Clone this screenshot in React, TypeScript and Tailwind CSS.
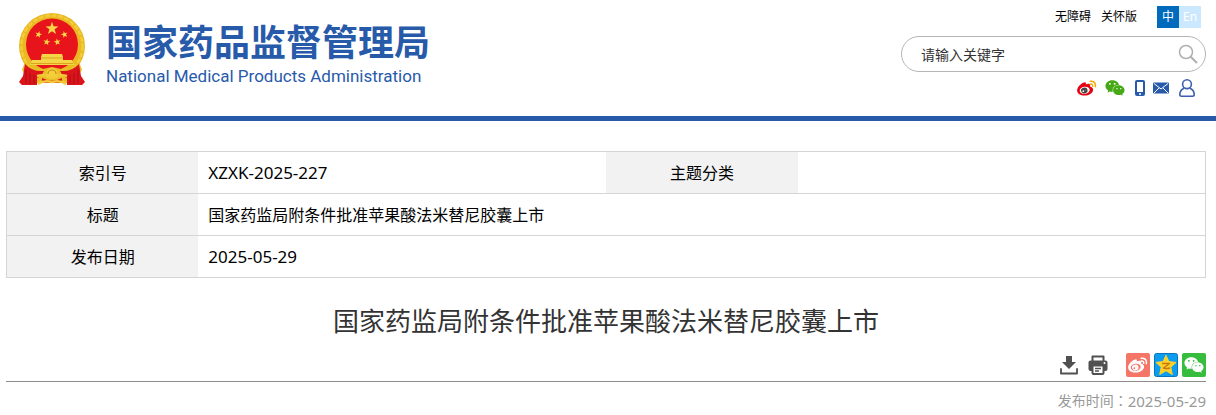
import React from 'react';
import { FaWeixin } from 'react-icons/fa';

const STAR = '0,-10 2.35,-3.24 9.51,-3.09 3.8,1.24 5.88,8.09 0,4 -5.88,8.09 -3.8,1.24 -9.51,-3.09 -2.35,-3.24';

const Emblem: React.FC = () => (
  <svg className="h-[73px] w-[68px] shrink-0" viewBox="0 0 68 73" aria-hidden="true">
    {/* wheat ring */}
    <circle cx="34" cy="33" r="33" fill="#e9b822" />
    <circle cx="34" cy="33" r="30.5" fill="none" stroke="#f2cc3a" strokeWidth="2.5" strokeDasharray="5 1.5" />
    <circle cx="34" cy="31.500" r="26" fill="#e8141b" />
    {/* stars */}
    <g fill="#f8d648">
      <polygon points={STAR} transform="translate(34 15.500) scale(.68)" />
      <polygon points={STAR} transform="translate(20.500 21.500) rotate(15) scale(.36)" />
      <polygon points={STAR} transform="translate(46.500 21.500) rotate(-15) scale(.36)" />
      <polygon points={STAR} transform="translate(28.700 29) rotate(10) scale(.36)" />
      <polygon points={STAR} transform="translate(39.300 29) rotate(-10) scale(.36)" />
    </g>
    {/* gate */}
    <path d="M24 41h20l1 3v3h9l2 5H12l2-5h9v-3z" fill="#f5d548" />
    <path d="M23 45h22M13 50.500h42" stroke="#dca41d" strokeWidth="1" />
    {/* ribbons */}
    <path d="M7 49q8 8 18 7l9-2 9 2q10 1 18-7l3 8-6 8v5H10v-5l-6-8z" fill="#e9bd25" />
    <path d="M7 51q7 8 19 7l-3 5-4 2v7H4L1 69l4-6zM61 51q-7 8-19 7l3 5 4 2v7h15l3-3-4-6z" fill="#db141c" />
    <path d="M8 57v13M12 60v11M16 62v9M60 57v13M56 60v11M52 62v9" stroke="#ad0f15" strokeWidth="1" />
    {/* cog */}
    <path d="M24 65q10 5 20 0v5H24z" fill="#db141c" />
    <circle cx="34" cy="60.500" r="5.500" fill="#f4cf3e" />
    <path d="M30 61a4 4 0 018 0" fill="none" stroke="#c98c16" strokeWidth="1.200" />
    <path d="M19 63q8-2 11 1h8q3-3 11-1M20 71q6-4 14-2 8-2 14 2" fill="none" stroke="#f2cb38" strokeWidth="2.500" />
  </svg>
);

interface WeiboProps {
  className: string;
  body: string;
  eye: string;
  pupil: string;
  wave: string;
}

const Weibo: React.FC<WeiboProps> = ({ className, body, eye, pupil, wave }) => (
  <svg className={className} viewBox="0 0 20 16" aria-hidden="true">
    <path
      d="M7.7 2.2c1-.3 1.5.6 1.1 2.1 2.3-1 4.600-.9 4.400 1.200-.1.700-.3 1.100.4 1.300 1.500.5 2.700 1.500 2.500 3.400-.4 3-4.300 5.300-8.600 5.300C3.400 15.500.1 13.500.1 10.400.1 7 4.500 2.900 7.700 2.200z"
      fill={body}
    />
    <ellipse cx="7.700" cy="10.200" rx="5" ry="3.500" fill={eye} transform="rotate(-8 7.700 10.200)" />
    <ellipse cx="7.300" cy="10.500" rx="3.300" ry="2.900" fill={pupil} transform="rotate(-15 7.300 10.500)" />
    <circle cx="6.300" cy="11.200" r=".9" fill={eye} />
    <circle cx="8.100" cy="10.100" r=".4" fill={eye} />
    <path
      d="M13.200 1.300c3.300-.7 5.900 1.700 5.100 5.400M13.300 4c1.500-.3 2.600.7 2.300 2.300"
      fill="none"
      stroke={wave}
      strokeWidth="1.500"
      strokeLinecap="round"
    />
  </svg>
);

const Phone: React.FC = () => (
  <svg className="h-4 w-2.5" viewBox="0 0 10 16" aria-hidden="true">
    <rect width="10" height="16" rx="2" fill="#285aaa" />
    <rect x="2" y="2" width="6" height="10" fill="#fff" />
    <circle cx="5" cy="14" r="1" fill="#fff" />
  </svg>
);

const Mail: React.FC = () => (
  <svg className="h-3 w-4" viewBox="0 0 16 12" aria-hidden="true">
    <rect y=".5" width="16" height="11" rx="1" fill="#285aaa" />
    <path d="M1 1.500l7 5.500 7-5.500M1 11l5-5M15 11l-5-5" fill="none" stroke="#fff" strokeWidth="1" />
  </svg>
);

const User: React.FC = () => (
  <svg className="h-[18px] w-4" viewBox="0 0 16 18" fill="none" stroke="#3d5fae" strokeWidth="1.600" aria-hidden="true">
    <circle cx="8" cy="5.200" r="4.400" />
    <path d="M5 9.200C2.400 10.300.8 12.700.8 15.500q0 1.700 1.700 1.700h11q1.700 0 1.700-1.700c0-2.800-1.600-5.200-4.200-6.300" />
  </svg>
);

const Download: React.FC = () => (
  <svg className="h-5 w-[18px]" viewBox="0 0 18 20" aria-hidden="true">
    <path d="M6 1h6v6h4L9 14 2 7h4z" fill="#505050" />
    <path d="M1 14v4.500h16V14" fill="none" stroke="#505050" strokeWidth="1.800" strokeLinejoin="round" strokeLinecap="round" />
  </svg>
);

const Printer: React.FC = () => (
  <svg className="h-5 w-5" viewBox="0 0 20 20" aria-hidden="true">
    <path d="M4.500 6V1.500h11V6" fill="none" stroke="#505050" strokeWidth="2" strokeLinejoin="round" />
    <rect x=".5" y="5.500" width="19" height="10.500" rx="2" fill="#505050" />
    <rect x="4.500" y="10.500" width="11" height="8.500" rx="1" fill="#fff" stroke="#505050" strokeWidth="2" />
    <path d="M7 13.500h6M7 16h4" stroke="#505050" strokeWidth="1.300" />
    <circle cx="16.500" cy="8" r="1" fill="#fff" />
  </svg>
);

const Qzone: React.FC = () => (
  <svg className="h-6 w-6" viewBox="0 0 24 24" aria-hidden="true">
    <rect x=".5" y=".5" width="23" height="23" rx="2" fill="#0c9cf0" stroke="#0874bd" />
    <path
      d="M12 2.200l2.900 6.400 7.200.8-5.300 4.800 1.500 7.300-6.300-3.700-6.300 3.700 1.500-7.300-5.300-4.800 7.200-.8z"
      fill="#fdd02b"
      stroke="#fdd02b"
      strokeWidth="1"
      strokeLinejoin="round"
    />
    <path d="M8 10.500h7.500l-6 4.500q3 1 6.500 0" fill="none" stroke="#c9790b" strokeWidth="1.400" strokeLinejoin="round" />
  </svg>
);

const TH = 'w-[16%] bg-[#f2f2f2] font-normal';
const TD = 'px-2.5';

export default function App() {
  return (
    <div className="bg-white font-['Noto_Sans','Noto_Sans_CJK_SC',sans-serif] text-black">
      <header className="flex h-[121px] items-start justify-between border-b-5 border-[#285aaa] pr-2.5 pl-[18px]">
        <a href="#" className="flex items-start gap-5 pt-[13px] text-[#285aaa]">
          <Emblem />
          <span className="block pt-[9px]">
            <span className="block font-['Noto_Sans_CJK_SC',sans-serif] text-[36px] leading-9 font-bold">国家药品监督管理局</span>
            <span className="block pt-1.5 font-[Roboto,sans-serif] text-[17px] leading-6">National Medical Products Administration</span>
          </span>
        </a>

        <div className="w-[305px]">
          <div className="mt-1.5 mr-[5px] flex h-[22px] items-center justify-end gap-2.5 text-[12px]">
            <a href="#">无障碍</a>
            <a href="#">关怀版</a>
            <span className="ml-2.5 flex text-center leading-[22px] text-white">
              <a href="#" className="w-[22px] bg-[#006bbd]">中</a>
              <a href="#" className="w-[22px] bg-[#cce8ff]">En</a>
            </span>
          </div>

          <form className="mt-2 flex h-9 items-center rounded-full border border-[#b5b5b5] pr-[7px] pl-[19px]">
            <input
              type="text"
              aria-label="请输入关键字"
              placeholder="请输入关键字"
              className="min-w-0 flex-1 text-[14px] outline-none placeholder:text-[#333]"
            />
            <button type="button" aria-label="搜索">
              <svg className="h-5 w-5" viewBox="0 0 20 20" fill="none" stroke="#b0b0b0" strokeWidth="1.500">
                <circle cx="8" cy="8" r="6.500" />
                <path d="M12.700 12.700L19 19" strokeWidth="2" />
              </svg>
            </button>
          </form>

          <div className="mt-1.5 mr-[11px] flex h-5 items-center justify-end">
            <a href="#" aria-label="微博" className="mr-2">
              <Weibo className="h-4 w-5" body="#e60012" eye="#fff" pupil="#444" wave="#f3a90e" />
            </a>
            <a href="#" aria-label="微信" className="mr-2.5">
              <FaWeixin className="h-5 w-5 text-[#45a814]" />
            </a>
            <a href="#" aria-label="手机" className="mr-2">
              <Phone />
            </a>
            <a href="#" aria-label="邮箱" className="mr-2.5">
              <Mail />
            </a>
            <a href="#" aria-label="用户">
              <User />
            </a>
          </div>
        </div>
      </header>

      <main className="mr-2.5 ml-1.5 pt-[30px]">
        <table className="w-full table-fixed border-collapse border border-[#d5d5d5] text-[16px]">
          <tbody>
            <tr className="h-[42px] border-b border-[#d5d5d5]">
              <th scope="row" className={TH}>索引号</th>
              <td className="w-[34%] px-2.5 text-[17px]">XZXK-2025-227</td>
              <th scope="row" className={TH}>主题分类</th>
              <td className={TD} />
            </tr>
            <tr className="h-[42px] border-b border-[#d5d5d5]">
              <th scope="row" className={TH}>标题</th>
              <td colSpan={3} className={TD}>国家药监局附条件批准苹果酸法米替尼胶囊上市</td>
            </tr>
            <tr className="h-[42px]">
              <th scope="row" className={TH}>发布日期</th>
              <td colSpan={3} className="px-2.5 text-[17px]">2025-05-29</td>
            </tr>
          </tbody>
        </table>

        <h1 className="mt-[23px] text-center text-[26px] leading-10 text-[#333]">国家药监局附条件批准苹果酸法米替尼胶囊上市</h1>

        <div className="mt-3 flex items-center justify-end gap-1 border-b border-[#8c8c8c] pb-1">
          <button type="button" aria-label="下载" className="mr-1.5">
            <Download />
          </button>
          <button type="button" aria-label="打印" className="mr-3.5">
            <Printer />
          </button>
          <a href="#" aria-label="分享到微博" className="flex h-6 w-6 items-center justify-center rounded-xs bg-[#f57567]">
            <Weibo className="h-4 w-5" body="#fff" eye="#f57567" pupil="#fff" wave="#fff" />
          </a>
          <a href="#" aria-label="分享到QQ空间">
            <Qzone />
          </a>
          <a href="#" aria-label="分享到微信" className="flex h-6 w-6 items-center justify-center rounded-xs bg-[#36bd3e]">
            <FaWeixin className="h-5 w-5 text-white" />
          </a>
        </div>

        <p className="flex items-center justify-end pt-1.5 text-[14px] leading-6 text-[#999]">
          <span>
            发布时间<span lang="zh-TW" className="font-['Noto_Sans_CJK_TC',sans-serif]">：</span>
          </span>
          <time dateTime="2025-05-29" className="text-[15px]">2025-05-29</time>
        </p>
      </main>
    </div>
  );
}
